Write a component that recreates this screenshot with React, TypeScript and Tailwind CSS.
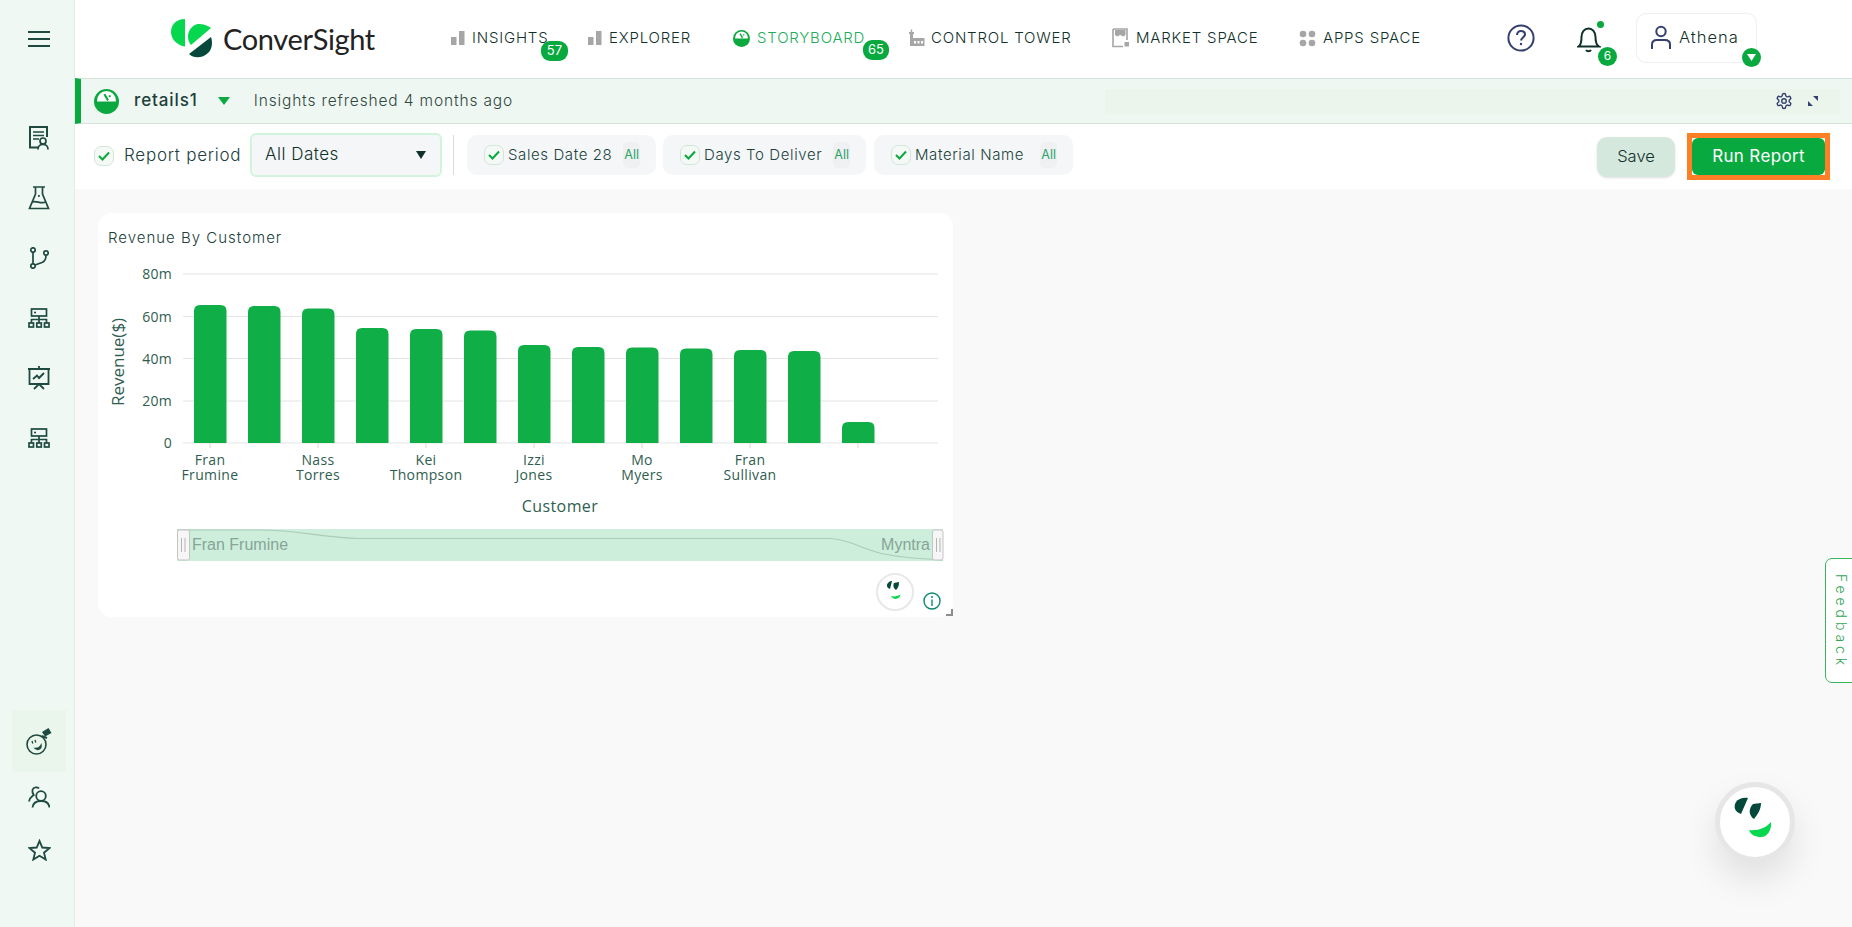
import React from "react";

const ui = "font-['Inter','Noto_Sans',sans-serif]";
const dark = "#1e4a40";

function BarsIcon() {
  return (
    <svg width="16" height="18" viewBox="0 0 16 18" className="mr-[6px] shrink-0">
      <rect x="1" y="8" width="5.5" height="8" fill="#a6a6a6" />
      <rect x="9" y="2" width="5.5" height="14" fill="#a6a6a6" />
    </svg>
  );
}
function GaugeIcon({ size = 18, color = "#0aa83f" }: { size?: number; color?: string }) {
  return (
    <svg width={size} height={size} viewBox="0 0 24 24" className="shrink-0">
      <circle cx="12" cy="12" r="12" fill={color} />
      <path d="M3 11 A9 9 0 0 1 21 11 L21 12 H3 Z" fill="#fff" />
      <path d="M10 5 L13.5 11" stroke={color} strokeWidth="2" />
      <rect x="14.2" y="6" width="1.8" height="1.8" fill={color} />
    </svg>
  );
}
function TowerIcon() {
  return (
    <svg width="17" height="18" viewBox="0 0 17 18" className="mr-[6px] shrink-0">
      <path d="M1 3 H6 V5 H5 V9 H16.5 V17 H2 V5 H1 Z" fill="#a6a6a6" />
      <rect x="2.8" y="0.5" width="1.4" height="2.5" fill="#a6a6a6" />
      <rect x="6" y="12" width="2" height="2.5" fill="#fff" />
      <rect x="9.5" y="12" width="2" height="2.5" fill="#fff" />
      <rect x="13" y="12" width="2" height="2.5" fill="#fff" />
    </svg>
  );
}
function MarketIcon() {
  return (
    <svg width="18" height="20" viewBox="0 0 18 20" className="mr-[6px] shrink-0">
      <path d="M1 1 H15 V12 M1 1 V18.5 H11" fill="none" stroke="#a6a6a6" strokeWidth="1.6" />
      <path d="M3 2 H13.5 V7 L11.5 8.5 L8.2 7 L5 8.5 L3 7 Z" fill="#a6a6a6" />
      <rect x="12.5" y="14" width="4.5" height="4.5" fill="#a6a6a6" />
    </svg>
  );
}
function AppsIcon() {
  return (
    <svg width="17" height="17" viewBox="0 0 17 17" className="mr-[7px] shrink-0">
      <circle cx="4" cy="4" r="3.3" fill="#a6a6a6" />
      <circle cx="13" cy="4" r="3.3" fill="#a6a6a6" />
      <circle cx="4" cy="13" r="3.3" fill="#a6a6a6" />
      <circle cx="13" cy="13" r="3.3" fill="#a6a6a6" />
    </svg>
  );
}
function Badge({ n, className }: { n: string; className: string }) {
  return (
    <span className={`absolute flex items-center justify-center bg-[#08a93f] text-white text-[13px] rounded-[9px] h-[20px] ${className}`}>{n}</span>
  );
}
function Check({ className = "" }: { className?: string }) {
  return (
    <span className={`flex items-center justify-center w-[20px] h-[20px] rounded-[7px] border border-[#d3e6da] bg-[#f4f9f5] shrink-0 ${className}`}>
      <svg width="12" height="10" viewBox="0 0 12 10"><path d="M1 5 L4.5 8.5 L11 1.5" fill="none" stroke="#0aa83f" strokeWidth="2" /></svg>
    </span>
  );
}
function Chip({ label, w, ml }: { label: string; w: string; ml: string }) {
  return (
    <div className={`h-[40px] rounded-[10px] bg-[#f5f6f8] flex items-center pl-[17px] pr-[3px] ${w} ${ml}`}>
      <Check className="mr-[4px]" />
      <span className="text-[15px] font-light tracking-[0.6px] text-[#20443c] whitespace-nowrap flex-1">{label}</span>
      <span className="text-[12.5px] text-[#2aa36a] bg-[#eff0f1] rounded-[5px] px-[1px] h-[26px] flex items-center mr-[13px]">All</span>
    </div>
  );
}
function Sitemap() {
  return (
    <svg width="22" height="20" viewBox="0 0 22 20" fill="none" stroke={dark} strokeWidth="1.7">
      <rect x="3.5" y="1" width="15" height="7" />
      <rect x="6" y="3.7" width="2" height="1.6" fill={dark} stroke="none" />
      <path d="M11 8 V15 M3.5 15 V11.5 H18.5 V15" />
      <rect x="1" y="15" width="4.5" height="4" />
      <rect x="8.8" y="15" width="4.5" height="4" />
      <rect x="16.5" y="15" width="4.5" height="4" />
    </svg>
  );
}
function SideSlot({ children }: { children: React.ReactNode }) {
  return <div className="h-[60px] flex items-center justify-center">{children}</div>;
}
function Sidebar() {
  return (
    <aside className="w-[75px] shrink-0 bg-[#f0f8f4] border-r border-[#e4ece8] flex flex-col pl-[4px]">
      <div className="h-[78px] flex items-center justify-center">
        <svg width="22" height="18" viewBox="0 0 22 18" stroke={dark} strokeWidth="2"><path d="M0 2 H22 M0 9 H22 M0 16 H22" /></svg>
      </div>
      <div className="mt-[30px] flex flex-col">
        <SideSlot>
          <svg width="22" height="24" viewBox="0 0 22 24" fill="none" stroke={dark} strokeWidth="1.7">
            <path d="M11 21.5 H2 V1 H19 V11" strokeWidth="2" />
            <path d="M5 6 H16 M5 9.5 H16 M5 13 H11" />
            <circle cx="15" cy="15" r="3" />
            <path d="M10 23.5 C10 20 12 18.5 15 18.5 C18 18.5 20 20 20 23.5" />
          </svg>
        </SideSlot>
        <SideSlot>
          <svg width="22" height="24" viewBox="0 0 22 24" fill="none" stroke={dark} strokeWidth="1.7">
            <path d="M5 1 H17 M7.5 1 V8 L1.5 22.5 H20.5 L14.5 8 V1" />
            <path d="M4.5 16 C8 14 13 18.5 17.5 16" />
            <rect x="10" y="9" width="1.8" height="1.8" fill={dark} stroke="none" />
          </svg>
        </SideSlot>
        <SideSlot>
          <svg width="20" height="22" viewBox="0 0 20 22" fill="none" stroke={dark} strokeWidth="1.7">
            <circle cx="4" cy="3" r="2.2" /><circle cx="4" cy="19" r="2.2" /><circle cx="17" cy="6" r="2.2" />
            <path d="M4 5.2 V16.8 M6 18 L13 15.5 C15.5 14.5 17 12 17 8.2" />
          </svg>
        </SideSlot>
        <SideSlot><Sitemap /></SideSlot>
        <SideSlot>
          <svg width="24" height="24" viewBox="0 0 24 24" fill="none" stroke={dark} strokeWidth="1.8">
            <path d="M1 3 H23 M2.5 3 V18 H21.5 V3 M12 0 V3 M7 23 L12 18 L17 23" />
            <path d="M6 13 L10 9.5 L12 12 L17 7" strokeWidth="1.9" />
          </svg>
        </SideSlot>
        <SideSlot><Sitemap /></SideSlot>
      </div>
      <div className="mt-auto mb-[50px] flex flex-col items-center">
        <div className="w-[54px] h-[62px] bg-[#eaf5ec] flex items-center justify-center">
          <svg width="26" height="28" viewBox="0 0 26 28" fill="none" stroke={dark} strokeWidth="1.6">
            <circle cx="10.5" cy="17.5" r="9.5" />
            <path d="M6 14 L6.8 16.5 M9 13 L9.8 15.5" strokeWidth="1.3" />
            <path d="M9.5 21.5 C12 21.5 14 20.5 15 18.5 C15.5 21.5 12 23.5 9.5 21.5 Z" fill={dark} />
            <path d="M16 5 L22.5 1 L25.5 6 L19 9.5 Z" fill={dark} stroke="none" />
            <path d="M15.5 9 L21 11" strokeWidth="2" />
          </svg>
        </div>
        <div className="h-[52px] w-full flex items-center justify-center mt-[-1px]">
          <svg width="22" height="22" viewBox="0 0 22 22" fill="none" stroke={dark} strokeWidth="1.8">
            <circle cx="13" cy="10" r="4.8" />
            <path d="M4.5 21.5 C5 17 8 15 13 15 C18 15 21 17 21.5 21.5" />
            <path d="M11 2.5 C9.5 0.8 5.5 0.8 4.5 3.8 C4 6 5 8 5.8 9 C4 10.5 1.5 11.5 1 15.5" />
          </svg>
        </div>
        <div className="h-[54px] w-full flex items-center justify-center">
          <svg width="23" height="22" viewBox="0 0 24 23" fill="none" stroke={dark} strokeWidth="1.9">
            <path d="M12 2 L14.9 8.9 L22.5 9.5 L16.7 14.3 L18.5 21.5 L12 17.6 L5.5 21.5 L7.3 14.3 L1.5 9.5 L9.1 8.9 Z" />
          </svg>
        </div>
      </div>
    </aside>
  );
}
function NavItem({ icon, label, color, w, children }: { icon: React.ReactNode; label: string; color?: string; w: string; children?: React.ReactNode }) {
  return (
    <div className={`relative flex items-center ${w}`}>
      {icon}
      <span className={`text-[15px] font-light tracking-[0.8px] whitespace-nowrap ${color ?? "text-[#10302a]"}`}>{label}</span>
      {children}
    </div>
  );
}
function Header() {
  return (
    <header className="h-[78px] shrink-0 bg-white flex items-center">
      <div className="ml-[94px] flex items-center w-[206px] mt-[-2px]">
        <svg width="44" height="42" viewBox="168 16 44 42" className="shrink-0">
          <path d="M184 18 C174 18 170 25 170 31 C170 38 176 44.5 184 45.5 Z" fill="#05d84e" />
          <path d="M210 27 C205 23.5 201 23 197 23 C191 24 187 30 187 35 C187 39 188 42 190 44 Z" fill="#05d84e" />
          <path d="M188 53 L210 36 C212 42 211 48 207 52 C202 57 193 58 188 53 Z" fill="#04493b" />
        </svg>
        <span className="ml-[10px] text-[29px] font-normal text-[#222] tracking-[-0.35px] leading-none font-['Lato','Inter',sans-serif]">ConverSight</span>
      </div>
      <div className="flex items-center ml-[75px] mt-[-2px]">
        <NavItem w="w-[137px]" icon={<BarsIcon />} label="INSIGHTS">
          <Badge n="57" className="w-[27px] left-[91px] top-[14px]" />
        </NavItem>
        <NavItem w="w-[146px]" icon={<BarsIcon />} label="EXPLORER" />
        <NavItem w="w-[175px]" icon={<span className="mr-[7px]"><GaugeIcon size={17} /></span>} label="STORYBOARD" color="text-[#21ad5a]">
          <Badge n="65" className="w-[26px] left-[130px] top-[13px]" />
        </NavItem>
        <NavItem w="w-[204px]" icon={<TowerIcon />} label="CONTROL TOWER" />
        <NavItem w="w-[187px]" icon={<MarketIcon />} label="MARKET SPACE" />
        <NavItem w="w-[125px]" icon={<AppsIcon />} label="APPS SPACE" />
      </div>
      <div className="ml-auto flex items-center mr-[95px] mt-[-3px]">
        <svg width="28" height="28" viewBox="0 0 28 28" fill="none" stroke="#34406f" strokeWidth="2" className="mr-[42px]">
          <circle cx="14" cy="14" r="12.6" />
          <path d="M10 11 C10 8.5 12 7 14 7 C16.5 7 18 8.7 18 10.6 C18 13 14.5 13.5 14 16.5" strokeWidth="2.1" />
          <circle cx="14" cy="20" r="1.2" fill="#34406f" stroke="none" />
        </svg>
        <div className="relative w-[26px] h-[28px] mr-[33px] mt-[2px]">
          <svg width="24" height="28" viewBox="0 0 24 28" fill="none" stroke="#10302a" strokeWidth="2">
            <path d="M1.5 21.5 C4 20 4.5 16 4.5 12 C4.5 7 7.5 3.5 11.5 3.5 C15.5 3.5 18.5 7 18.5 12 C18.5 16 19.5 20 22 21.5 Z" />
            <path d="M9 25 C10 26.7 13 26.7 14 25" />
          </svg>
          <span className="absolute left-[20px] top-[-4px] w-[7px] h-[7px] rounded-full bg-[#08a93f]" />
          <span className="absolute left-[21px] top-[22px] w-[19px] h-[19px] rounded-full bg-[#08a93f] text-white text-[12px] flex items-center justify-center">6</span>
        </div>
        <div className="relative w-[121px] h-[50px] rounded-[10px] border border-[#eeeeee] flex items-center pl-[13px]">
          <svg width="22" height="25" viewBox="0 0 22 25" fill="none" stroke="#34406f" strokeWidth="2">
            <circle cx="11" cy="6.5" r="4.7" />
            <path d="M2 24 V19.5 C2 16.5 4 15 7 15 H15 C18 15 20 16.5 20 19.5 V24" />
          </svg>
          <span className="ml-[7px] text-[16.5px] font-light tracking-[1px] text-[#10302a]">Athena</span>
          <span className="absolute right-[-5px] bottom-[-5px] w-[19px] h-[19px] rounded-full bg-[#08a93f] flex items-center justify-center">
            <svg width="9" height="7" viewBox="0 0 9 7"><path d="M0 0 H9 L4.5 7 Z" fill="#fff" /></svg>
          </span>
        </div>
      </div>
    </header>
  );
}
function Strip() {
  return (
    <div className="h-[46px] shrink-0 bg-[#eff7f2] border-y border-[#d5e3dc] border-l-[6px] border-l-[#08a93f] flex items-center pr-[12px]">
      <span className="ml-[13px]"><GaugeIcon size={25} /></span>
      <span className="ml-[15px] text-[17px] font-medium tracking-[0.9px] text-[#20403a]">retails1</span>
      <svg width="12" height="8" viewBox="0 0 12 8" className="ml-[20px]"><path d="M0 0 H12 L6 8 Z" fill="#08a93f" /></svg>
      <span className="ml-[24px] text-[15.5px] font-light tracking-[0.85px] text-[#30483f]">Insights refreshed 4 months ago</span>
      <div className="ml-auto w-[735px] h-[25px] bg-[#ebf5eb] flex items-center justify-end pr-[22px]">
        <svg width="18" height="18" viewBox="0 0 24 24" fill="none" stroke="#34406f" strokeWidth="1.9">
          <path d="M12.2 2h-.4a2 2 0 0 0-2 2v.2a2 2 0 0 1-1 1.7l-.4.3a2 2 0 0 1-2 0l-.2-.1a2 2 0 0 0-2.7.7l-.2.4a2 2 0 0 0 .7 2.7l.2.1a2 2 0 0 1 1 1.7v.5a2 2 0 0 1-1 1.7l-.2.1a2 2 0 0 0-.7 2.7l.2.4a2 2 0 0 0 2.7.7l.2-.1a2 2 0 0 1 2 0l.4.3a2 2 0 0 1 1 1.7v.2a2 2 0 0 0 2 2h.4a2 2 0 0 0 2-2v-.2a2 2 0 0 1 1-1.7l.4-.3a2 2 0 0 1 2 0l.2.1a2 2 0 0 0 2.7-.7l.2-.4a2 2 0 0 0-.7-2.7l-.2-.1a2 2 0 0 1-1-1.7v-.5a2 2 0 0 1 1-1.7l.2-.1a2 2 0 0 0 .7-2.7l-.2-.4a2 2 0 0 0-2.7-.7l-.2.1a2 2 0 0 1-2 0l-.4-.3a2 2 0 0 1-1-1.7V4a2 2 0 0 0-2-2z" />
          <circle cx="12" cy="12" r="3" />
        </svg>
        <svg width="10" height="10" viewBox="0 0 10 10" className="ml-[15px]">
          <path d="M5 0 H10 V5 Z M0 5 L5 10 H0 Z" fill="#34406f" />
        </svg>
      </div>
    </div>
  );
}
function Filters() {
  return (
    <div className="h-[65px] shrink-0 bg-white flex items-center pl-[19px] pr-[22px]">
      <Check className="mb-[2px]" />
      <span className="ml-[10px] w-[126px] mb-[1px] text-[17px] font-light tracking-[0.75px] text-[#20403a] whitespace-nowrap">Report period</span>
      <div className="w-[192px] h-[44px] rounded-[6px] border-2 border-[#d0f5dc] bg-[#f5f6f8] flex items-center justify-between pl-[13px] pr-[14px] mb-[3px]">
        <span className="text-[17px] font-light tracking-[0.5px] text-[#10302a]">All Dates</span>
        <svg width="10" height="8" viewBox="0 0 10 8"><path d="M0 0 H10 L5 8 Z" fill="#10302a" /></svg>
      </div>
      <div className="ml-[11px] w-[1px] h-[40px] bg-[#dcdcdc] mb-[3px]" />
      <div className="flex mb-[3px]">
        <Chip label="Sales Date 28" w="w-[189px]" ml="ml-[13px]" />
        <Chip label="Days To Deliver" w="w-[203px]" ml="ml-[7px]" />
        <Chip label="Material Name" w="w-[199px]" ml="ml-[8px]" />
      </div>
      <div className="ml-auto flex items-center">
        <button className="w-[78px] h-[40px] rounded-[10px] bg-[#d5e8dd] text-[16.5px] font-light text-[#10302a] shadow-sm">Save</button>
        <div className="ml-[12px] w-[143px] h-[47px] border-[5px] border-[#ff7f27] bg-white">
          <button className="w-full h-full rounded-[6px] bg-[#08a93f] text-white text-[17px] font-normal tracking-[0.35px]">Run Report</button>
        </div>
      </div>
    </div>
  );
}
const bars: [number, number][] = [
  [194, 305], [248, 306], [302, 308.5], [356, 328], [410, 329], [464, 330.5],
  [518, 345], [572, 347], [626, 347.5], [680, 348.5], [734, 350], [788, 351], [842, 422],
];
const grid: [string, number][] = [["80m", 274], ["60m", 316.5], ["40m", 358.5], ["20m", 401], ["0", 443]];
const labels: [number, string, string][] = [
  [210, "Fran", "Frumine"], [318, "Nass", "Torres"], [426, "Kei", "Thompson"],
  [534, "Izzi", "Jones"], [642, "Mo", "Myers"], [750, "Fran", "Sullivan"],
];
function Chart() {
  return (
    <svg width="855" height="367" viewBox="98 250 855 367" className="block font-['Open_Sans','Noto_Sans',sans-serif]">
      {grid.map(([t, y]) => (
        <g key={t}>
          <line x1="183" x2="938" y1={y} y2={y} stroke="#e4e4e4" strokeWidth="1.2" />
          <text x="172" y={y + 5} textAnchor="end" fontSize="14" fill="#2f5d50" letterSpacing=".3">{t}</text>
        </g>
      ))}
      {bars.map(([x, t]) => (
        <path key={x} d={`M${x} 443 V${t + 6} Q${x} ${t} ${x + 6} ${t} H${x + 26.5} Q${x + 32.5} ${t} ${x + 32.5} ${t + 6} V443 Z`} fill="#10ae47" />
      ))}
      {[210, 318, 426, 534, 642, 750, 858].map((x) => (
        <line key={x} x1={x} x2={x} y1="443" y2="448" stroke="#d8d8d8" />
      ))}
      {labels.map(([x, a, b]) => (
        <text key={x} textAnchor="middle" fontSize="14" fill="#2f5d50" letterSpacing=".35">
          <tspan x={x} y="465">{a}</tspan>
          <tspan x={x} y="480">{b}</tspan>
        </text>
      ))}
      <text x="560" y="512" textAnchor="middle" fontSize="16" fill="#2f5d50" letterSpacing=".4">Customer</text>
      <text transform="translate(124 362) rotate(-90)" textAnchor="middle" fontSize="17" fill="#2f5d50">Revenue($)</text>

      <rect x="177" y="529" width="766" height="32" fill="#cdeedb" />
      <path d="M177 530 H260 C300 530 320 538 360 538.5 H830 C855 540 865 552 890 555 C905 558 925 559 943 560" fill="none" stroke="#a9cdb7" strokeWidth="1.2" />
      <g fontFamily="Liberation Sans, sans-serif" fontSize="16" fill="#87a597">
        <text x="192" y="550">Fran Frumine</text>
        <text x="930" y="550" textAnchor="end">Myntra</text>
      </g>
      <rect x="177.5" y="530" width="12" height="30" rx="2" fill="#f6f6f6" stroke="#c4c4c4" />
      <rect x="932.5" y="530" width="10.5" height="30" rx="2" fill="#f6f6f6" stroke="#c4c4c4" />
      <path d="M181.5 538 V552 M185 538 V552 M936.5 538 V552 M940 538 V552" stroke="#b5b5b5" />

      <circle cx="895" cy="592" r="18" fill="#fff" stroke="#e8e8e8" strokeWidth="2" />
      <path d="M888 583 C890 581 891 581 892 581 L890 589 C887 588 886 585 888 583 Z" fill="#04493b" />
      <path d="M894 583 L899 582 C899 586 898 588 896 590 C893 588 893 585 894 583 Z" fill="#04493b" />
      <path d="M891 596 C895 597 898 596 900.5 594.5 C900 599 894 601 891 596 Z" fill="#05d84e" />
      <circle cx="932" cy="601" r="8" fill="none" stroke="#0e8a6f" strokeWidth="1.4" />
      <path d="M932 599.5 V606" stroke="#0e8a6f" strokeWidth="1.4" />
      <circle cx="932" cy="597" r="1" fill="#0e8a6f" />
      <path d="M946 616 H953 V609 H951 V614 H946 Z" fill="#8d8d8d" />
    </svg>
  );
}
export default function App() {
  return (
    <div className={`relative flex w-[1852px] h-[927px] overflow-hidden bg-white ${ui}`}>
      <Sidebar />
      <main className="flex-1 min-w-0 flex flex-col">
        <Header />
        <Strip />
        <Filters />
        <section className="flex-1 bg-[#f9f9f9] pl-[23px] pt-[24px]">
          <div className="w-[855px] h-[404px] bg-white rounded-[14px]">
            <div className="h-[37px] pl-[10px] pt-[16px] text-[15px] font-light tracking-[1px] leading-[18px] text-[#20403a]">Revenue By Customer</div>
            <Chart />
          </div>
        </section>
      </main>
      <div className="absolute left-[1825px] top-[558px] w-[40px] h-[125px] rounded-l-[7px] border border-[#3db35f] bg-white flex items-start">
        <span className="ml-[5px] mt-[15px] [writing-mode:vertical-rl] text-[14px] font-light tracking-[3.9px] text-[#2fa653]">Feedback</span>
      </div>
      <div className="absolute left-[1715px] top-[782px] w-[80px] h-[80px] rounded-full bg-white border-[5px] border-[#e6e6e6] shadow-[0_18px_36px_rgba(0,0,0,0.10)]">
        <svg width="70" height="70" viewBox="0 0 70 70">
          <path d="M16 15 C18 12 23 10 28 11 L21 27 C15 25 13 20 16 15 Z" fill="#04493b" />
          <path d="M33 17 L41 16 C41 22 38 27 34 32 C29 29 28 22 33 17 Z" fill="#04493b" />
          <path d="M29 43 C38 44 46 41 51 35 C52 42 48 50 41 50 C35 50 31 48 29 43 Z" fill="#05d84e" />
        </svg>
      </div>
    </div>
  );
}
